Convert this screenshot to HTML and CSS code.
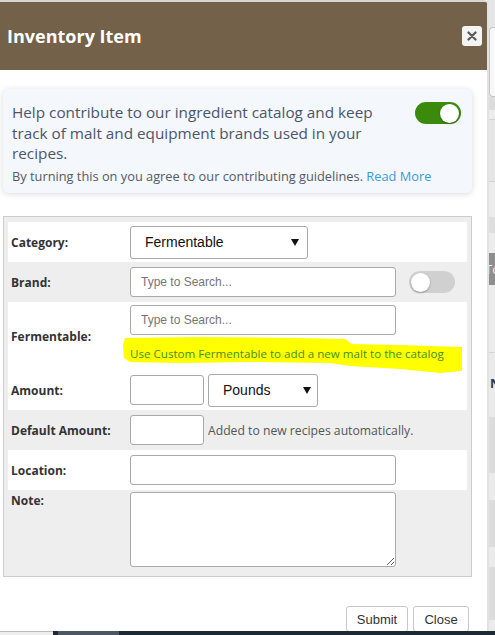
FILE: index.html
```html
<!DOCTYPE html>
<html lang="en">
<head>
<meta charset="utf-8">
<title>Inventory Item</title>
<link rel="stylesheet" href="styles.css">
</head>
<body>
<div class="screen">
  <div class="main">
    <div class="modal">
      <div class="modal-header">
        <h1 class="modal-title">Inventory Item</h1>
        <button class="close-btn" type="button" aria-label="Close">
          <svg width="10" height="10" viewBox="0 0 10 10"><path d="M1.5 1.5 L8.5 8.5 M8.5 1.5 L1.5 8.5" stroke="#5a5a5a" stroke-width="2.3" stroke-linecap="round"/></svg>
        </button>
      </div>
      <div class="modal-body">
        <div class="notice">
          <div class="notice-top">
            <p class="notice-lead">Help contribute to our ingredient catalog and keep track of malt and equipment brands used in your recipes.</p>
            <span class="toggle toggle-on"><span class="knob"></span></span>
          </div>
          <p class="notice-small">By turning this on you agree to our contributing guidelines. <a href="#">Read More</a></p>
        </div>

        <div class="form-panel">
          <div class="form-row row-white">
            <label class="form-label">Category:</label>
            <div class="form-field">
              <div class="select select-category"><span>Fermentable</span><span class="caret"></span></div>
            </div>
          </div>
          <div class="form-row">
            <label class="form-label">Brand:</label>
            <div class="form-field gap-toggle">
              <input class="input input-wide" type="text" placeholder="Type to Search...">
              <span class="toggle toggle-off"><span class="knob"></span></span>
            </div>
          </div>
          <div class="form-row row-white row-tall">
            <label class="form-label">Fermentable:</label>
            <div class="form-field stack">
              <input class="input input-wide" type="text" placeholder="Type to Search...">
              <div class="hint">
                <svg class="marker" width="345" height="40" viewBox="0 0 345 40"><polygon points="5,3 80,2 180,3 225,4 232,9 280,10 342,12 342,36 320,38 280,34 230,31 210,28 130,27 60,28 10,27 4,23 3,10" fill="#ffff00"/></svg>
                <span class="hint-text">Use Custom Fermentable to add a new malt to the catalog</span>
              </div>
            </div>
          </div>
          <div class="form-row row-white">
            <label class="form-label">Amount:</label>
            <div class="form-field gap-small">
              <input class="input input-short" type="text">
              <div class="select select-unit"><span>Pounds</span><span class="caret"></span></div>
            </div>
          </div>
          <div class="form-row">
            <label class="form-label">Default Amount:</label>
            <div class="form-field gap-small">
              <input class="input input-short" type="text">
              <span class="help-text">Added to new recipes automatically.</span>
            </div>
          </div>
          <div class="form-row row-white">
            <label class="form-label">Location:</label>
            <div class="form-field">
              <input class="input input-wide" type="text">
            </div>
          </div>
          <div class="form-row row-note">
            <label class="form-label">Note:</label>
            <div class="form-field">
              <textarea class="textarea"></textarea>
            </div>
          </div>
        </div>
      </div>
      <div class="modal-footer">
        <button class="btn btn-submit" type="button">Submit</button>
        <button class="btn btn-close" type="button">Close</button>
      </div>
    </div>

    <div class="backdrop">
      <div class="bd bd-1"></div>
      <div class="bd bd-input"></div>
      <div class="bd bd-3"></div>
      <div class="bd bd-4"></div>
      <div class="bd bd-5"></div>
      <div class="bd bd-6"></div>
      <div class="bd bd-7"></div>
      <div class="bd bd-8"></div>
      <div class="bd bd-dark"><span>To</span></div>
      <div class="bd bd-10"></div>
      <div class="bd bd-11"><span>N</span></div>
      <div class="bd bd-12"></div>
      <div class="bd bd-13"></div>
      <div class="bd bd-14"></div>
      <div class="bd bd-15"></div>
      <div class="bd bd-16"></div>
      <div class="bd bd-17"></div>
    </div>
  </div>
  <div class="taskbar">
    <div class="tb tb-1"></div>
    <div class="tb tb-2"></div>
    <div class="tb tb-3"></div>
    <div class="tb tb-4"></div>
  </div>
</div>
</body>
</html>
```

FILE: styles.css
```css
* { box-sizing: border-box; }
html, body { margin: 0; padding: 0; }
body {
  width: 495px;
  height: 635px;
  overflow: hidden;
  font-family: "Open Sans", sans-serif;
  background: #e9e9e9;
}
.screen { display: flex; flex-direction: column; height: 635px; }
.main { display: flex; height: 631px; }

/* modal */
.modal {
  width: 487px;
  flex: none;
  background: #fff;
  display: flex;
  flex-direction: column;
  overflow: hidden;
}
.modal-header {
  height: 70px;
  flex: none;
  background: #736249;
  border-top: 2px solid #d9d5cf;
  border-top-right-radius: 3px;
  display: flex;
  align-items: center;
  justify-content: space-between;
  padding: 0 5px 0 7px;
}
.modal-title {
  margin: 0;
  color: #fff;
  font-size: 18px;
  font-weight: 700;
  line-height: 24px;
}
.close-btn {
  width: 20px;
  height: 20px;
  padding: 0;
  border: none;
  border-radius: 3px;
  background: #f4f4f4;
  display: flex;
  align-items: center;
  justify-content: center;
}
.close-btn svg { display: block; }

.modal-body { padding: 19px 15px 0 3px; }

.notice {
  height: 104px;
  background: #f4f7fb;
  border-radius: 6px;
  box-shadow: 0 1px 6px rgba(0, 0, 0, 0.15);
  padding: 13px 11px 8px 9px;
}
.notice-top {
  display: flex;
  align-items: flex-start;
  gap: 20px;
}
.notice-lead {
  flex: 1;
  margin: 0;
  font-size: 15.3px;
  line-height: 20.5px;
  color: #4b5669;
}
.notice-small {
  margin: 4px 0 0;
  font-size: 12.8px;
  line-height: 17px;
  color: #535b66;
  white-space: nowrap;
}
.notice-small a { color: #3b9ad9; text-decoration: none; }

.toggle {
  width: 46px;
  height: 22px;
  border-radius: 11px;
  flex: none;
  display: flex;
  align-items: center;
  padding: 0 2px;
}
.toggle-on { background: #3a8a0c; justify-content: flex-end; }
.toggle-off { background: #d0d0d0; justify-content: flex-start; }
.knob {
  width: 19px;
  height: 19px;
  border-radius: 50%;
  background: #fff;
  box-shadow: 0 1px 2px rgba(0, 0, 0, 0.3);
}

/* form */
.form-panel {
  margin-top: 23px;
  border: 1px solid #cccccc;
  background: #eeeeee;
  padding: 5px 4px 4px;
}
.form-row {
  display: grid;
  grid-template-columns: 122px 1fr;
  align-items: center;
  height: 40px;
}
.row-white { background: #fff; }
.row-tall { height: 68px; align-items: start; }
.row-tall .form-label { align-self: center; }
.row-note { height: 82px; align-items: start; padding-top: 2px; }
.form-label {
  font-size: 12px;
  font-weight: 700;
  color: #333;
  padding-left: 3px;
  line-height: 17px;
}
.form-field { display: flex; align-items: center; }
.gap-toggle { gap: 13px; }
.gap-small { gap: 4px; }
.stack { flex-direction: column; align-items: flex-start; padding-top: 3px; }

.select {
  display: flex;
  align-items: center;
  justify-content: space-between;
  height: 33px;
  border: 1px solid #a9a9a9;
  border-radius: 3px;
  background: #fff;
  padding: 0 8px 0 14px;
  font-family: "Liberation Sans", Arial, sans-serif;
  font-size: 14px;
  color: #111;
}
.select-category { width: 178px; }
.select-unit { width: 110px; padding-right: 6px; }
.caret {
  width: 0;
  height: 0;
  border-left: 4px solid transparent;
  border-right: 4px solid transparent;
  border-top: 7px solid #111;
}

.input {
  height: 30px;
  border: 1px solid #a9a9a9;
  border-radius: 3px;
  background: #fff;
  padding: 0 10px;
  font-family: "Liberation Sans", Arial, sans-serif;
  font-size: 12px;
  color: #333;
  margin: 0;
}
.input::placeholder { color: #757575; }
.input-wide { width: 266px; }
.input-short { width: 74px; }

.hint {
  position: relative;
  margin-top: 8px;
  line-height: 18px;
  white-space: nowrap;
}
.marker {
  position: absolute;
  left: -10px;
  top: -8px;
}
.hint-text {
  position: relative;
  font-size: 11.6px;
  color: #44901c;
}
.help-text {
  font-size: 12.2px;
  color: #555;
}
.textarea {
  width: 266px;
  height: 75px;
  border: 1px solid #a9a9a9;
  border-radius: 3px;
  margin: 0;
  display: block;
  resize: both;
}

.modal-footer {
  display: flex;
  justify-content: flex-end;
  gap: 5px;
  padding-right: 18px;
  margin-top: 29px;
}
.btn {
  height: 26px;
  padding: 0;
  border: 1px solid #c8c8c8;
  border-radius: 3px;
  background: #fff;
  font-family: "Liberation Sans", Arial, sans-serif;
  font-size: 13px;
  color: #333;
}
.btn-submit { width: 62px; }
.btn-close { width: 56px; }

/* page behind the modal */
.backdrop {
  flex: 1;
  display: flex;
  flex-direction: column;
  overflow: hidden;
  border-left: 2px solid #e2e2e2;
}
.bd { flex: none; }
.bd-1 { height: 27px; background: #e6e6e6; }
.bd-input { height: 70px; background: #f7f7f7; border: 1px solid #c4c4c4; border-right: none; border-radius: 4px 0 0 4px; }
.bd-3 { height: 13px; background: #dcdcdc; }
.bd-4 { height: 10px; background: #ececec; border-bottom: 1px solid #cfcfcf; }
.bd-5 { height: 62px; background: #e6e6e6; border-bottom: 1px solid #d2d2d2; }
.bd-6 { height: 35px; background: #ececec; }
.bd-7 { height: 16px; background: #dedede; }
.bd-8 { height: 20px; background: #ececec; }
.bd-dark {
  height: 32px;
  background: #8e8e8e;
  color: #f0f0f0;
  font-size: 13px;
  line-height: 32px;
  white-space: nowrap;
  text-indent: -4px;
}
.bd-10 { height: 68px; background: #ececec; border-bottom: 1px solid #d6d6d6; }
.bd-11 {
  height: 64px;
  background: #eaeaea;
  color: #2f3a44;
  font-size: 13px;
  font-weight: 700;
  line-height: 60px;
  white-space: nowrap;
  padding-left: 1px;
}
.bd-12 { height: 56px; background: #dcdcdc; }
.bd-13 { height: 27px; background: #ebebeb; }
.bd-14 { height: 47px; background: #dcdcdc; }
.bd-15 { height: 20px; background: #ebebeb; }
.bd-16 { height: 53px; background: #dcdcdc; }
.bd-17 { height: 11px; background: #ebebeb; }

.taskbar { display: flex; height: 4px; }
.tb { height: 4px; }
.tb-1 { width: 53px; background: #eeeeee; border-top: 1px solid #bbbbbb; }
.tb-2 { width: 5px; background: #1d2a34; }
.tb-3 { width: 61px; background: #4b5763; }
.tb-4 { flex: 1; background: #1b2a35; }
```
